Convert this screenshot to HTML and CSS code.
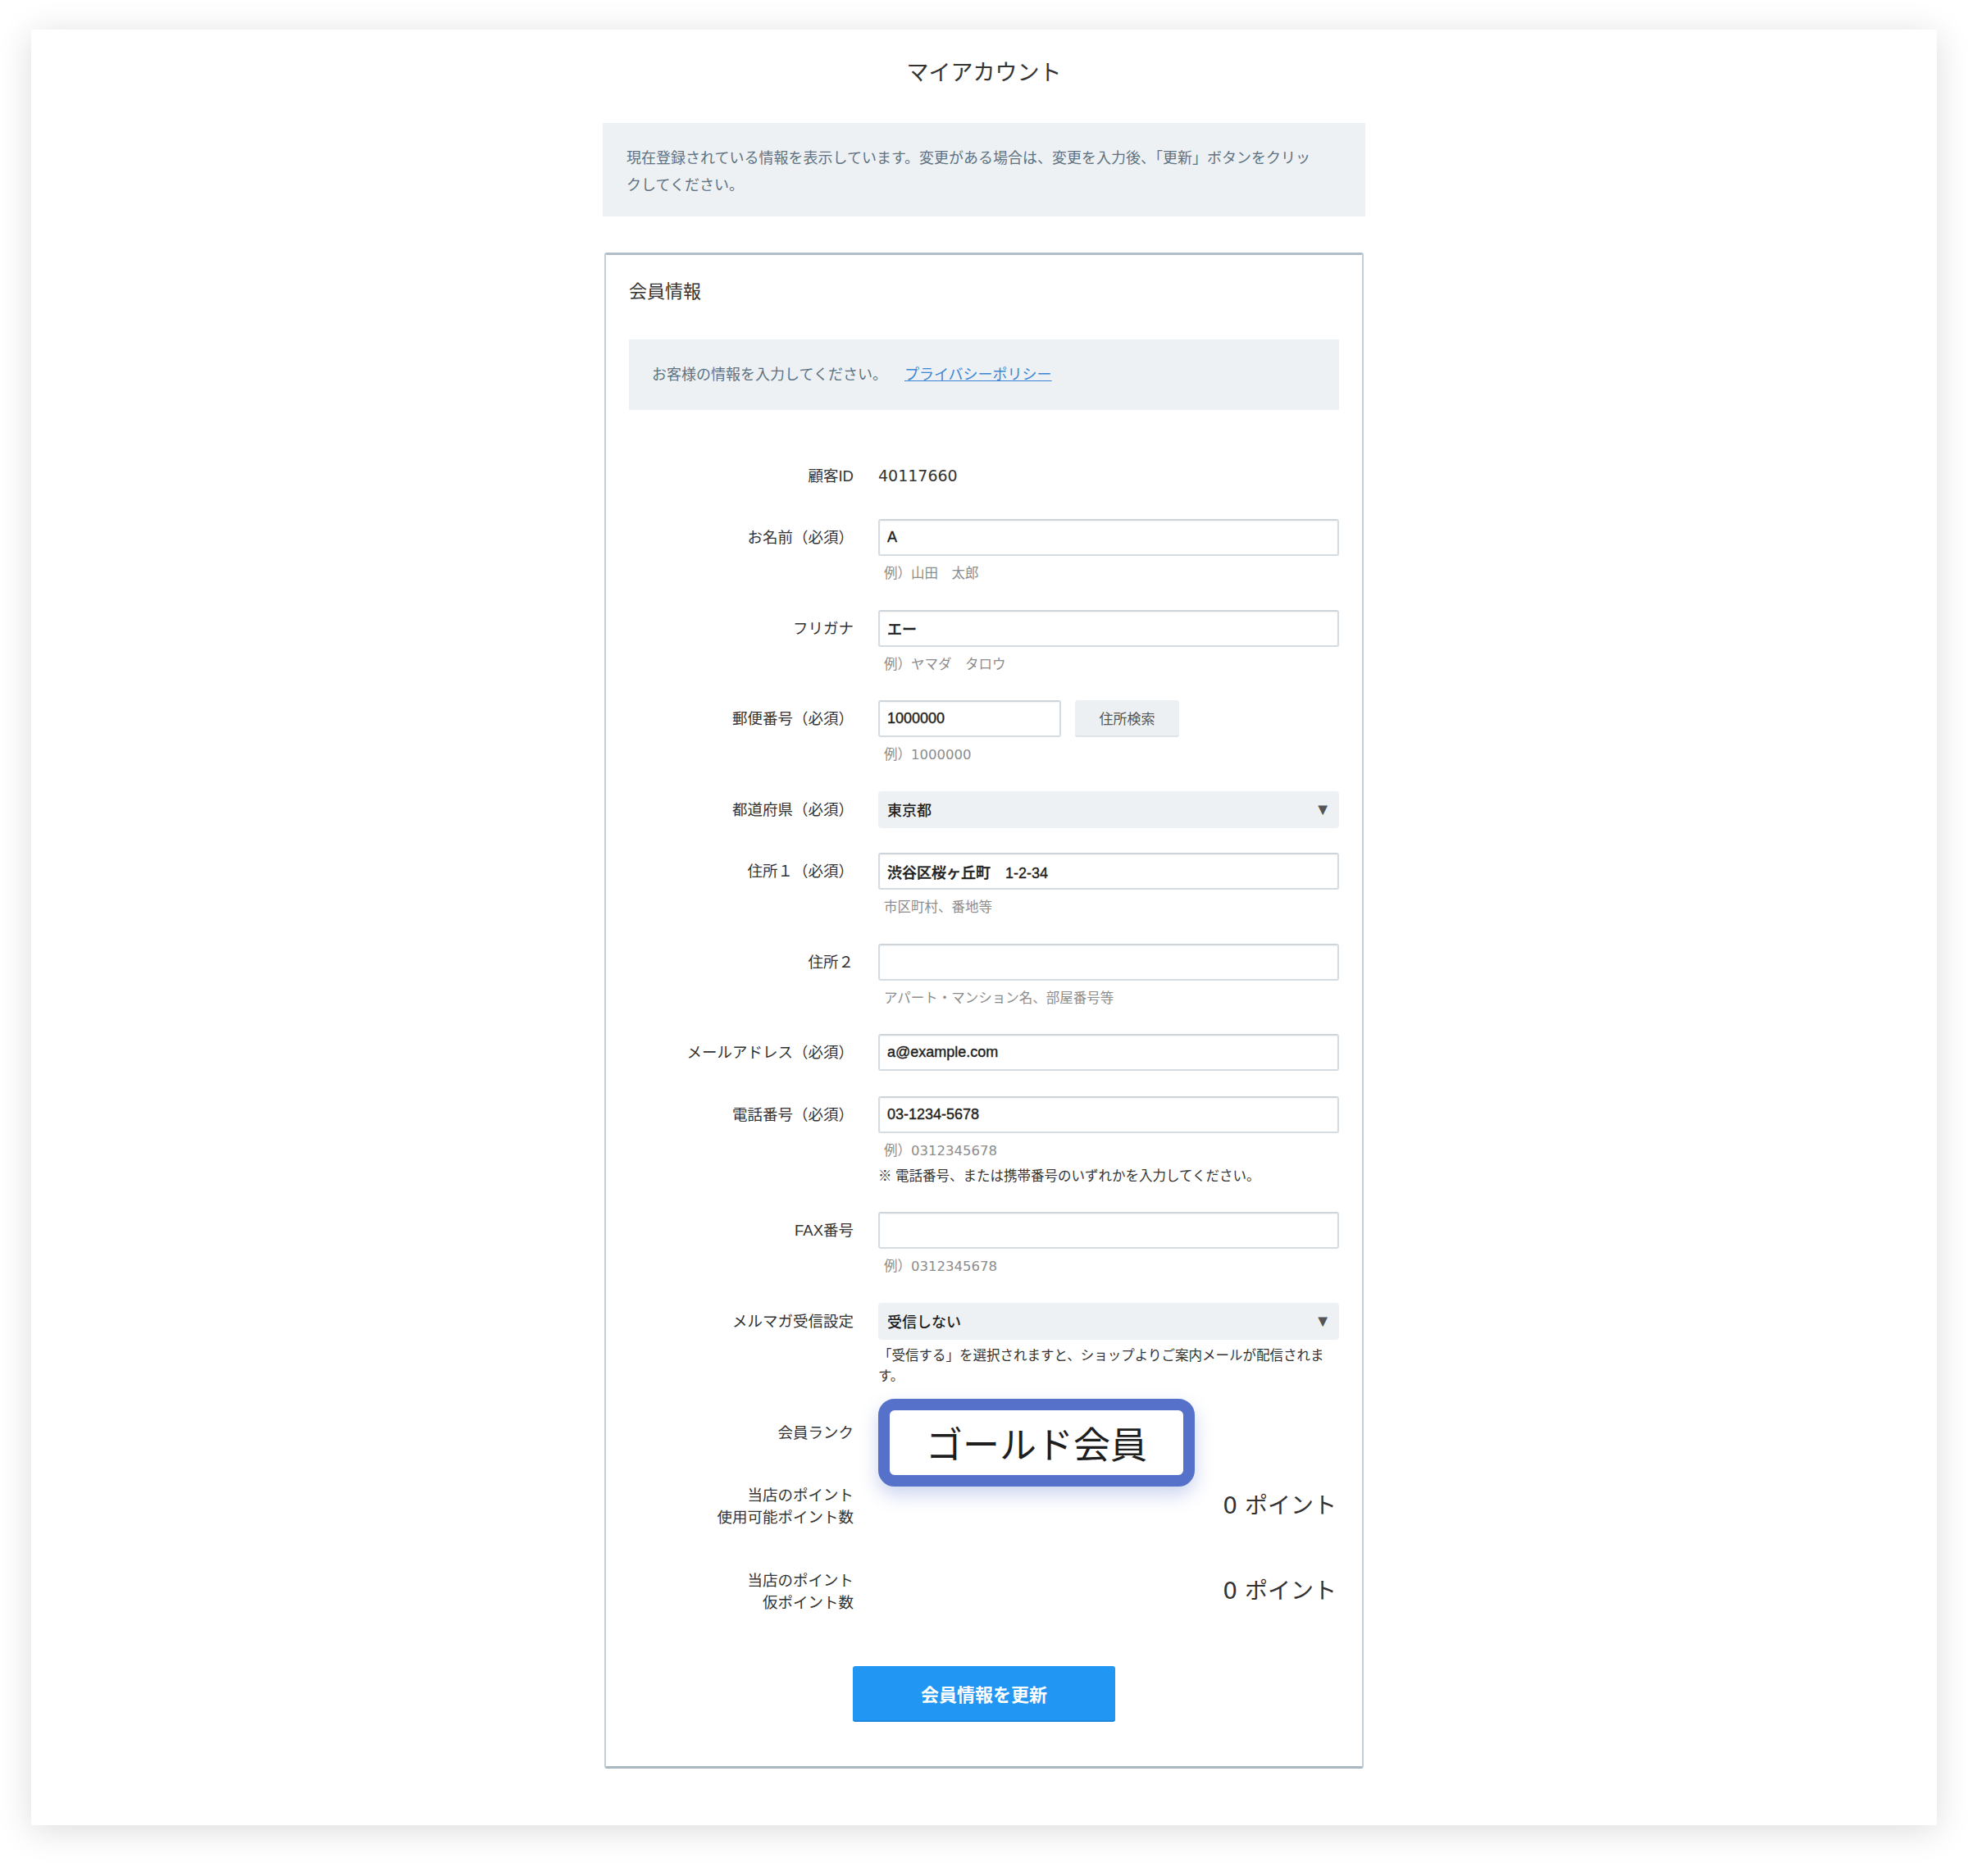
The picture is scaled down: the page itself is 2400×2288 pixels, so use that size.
FILE: index.html
```html
<!DOCTYPE html>
<html lang="ja">
<head>
    <meta charset="UTF-8">
    <title>マイアカウント</title>
    <link rel="stylesheet" href="styles.css">
</head>
<body>
    <div class="sheet">
        <h1 class="page-title">マイアカウント</h1>

        <div class="notice">現在登録されている情報を表示しています。変更がある場合は、変更を入力後、「更新」ボタンをクリックしてください。</div>

        <div class="card">
            <h2>会員情報</h2>
            <div class="card-intro">お客様の情報を入力してください。<a href="#">プライバシーポリシー</a></div>

            <form class="member-form">
                <div class="row">
                    <div class="label">顧客ID</div>
                    <div class="field"><span class="customer-id">40117660</span></div>
                </div>

                <div class="row">
                    <div class="label">お名前（必須）</div>
                    <div class="field">
                        <input class="text" type="text" value="A">
                        <p class="hint">例）山田　太郎</p>
                    </div>
                </div>

                <div class="row">
                    <div class="label">フリガナ</div>
                    <div class="field">
                        <input class="text" type="text" value="エー">
                        <p class="hint">例）ヤマダ　タロウ</p>
                    </div>
                </div>

                <div class="row">
                    <div class="label">郵便番号（必須）</div>
                    <div class="field">
                        <div class="zip-line">
                            <input class="text zip" type="text" value="1000000">
                            <button type="button" class="zip-search">住所検索</button>
                        </div>
                        <p class="hint">例）1000000</p>
                    </div>
                </div>

                <div class="row">
                    <div class="label">都道府県（必須）</div>
                    <div class="field">
                        <div class="select"><span>東京都</span><span class="arrow">▼</span></div>
                    </div>
                </div>

                <div class="row">
                    <div class="label">住所１（必須）</div>
                    <div class="field">
                        <input class="text" type="text" value="渋谷区桜ヶ丘町　1-2-34">
                        <p class="hint">市区町村、番地等</p>
                    </div>
                </div>

                <div class="row">
                    <div class="label">住所２</div>
                    <div class="field">
                        <input class="text" type="text" value="">
                        <p class="hint">アパート・マンション名、部屋番号等</p>
                    </div>
                </div>

                <div class="row">
                    <div class="label">メールアドレス（必須）</div>
                    <div class="field">
                        <input class="text" type="text" value="a@example.com">
                    </div>
                </div>

                <div class="row">
                    <div class="label">電話番号（必須）</div>
                    <div class="field">
                        <input class="text" type="text" value="03-1234-5678">
                        <p class="hint">例）0312345678</p>
                        <p class="note">※ 電話番号、または携帯番号のいずれかを入力してください。</p>
                    </div>
                </div>

                <div class="row">
                    <div class="label">FAX番号</div>
                    <div class="field">
                        <input class="text" type="text" value="">
                        <p class="hint">例）0312345678</p>
                    </div>
                </div>

                <div class="row mag">
                    <div class="label">メルマガ受信設定</div>
                    <div class="field">
                        <div class="select"><span>受信しない</span><span class="arrow">▼</span></div>
                        <p class="note mag-note">「受信する」を選択されますと、ショップよりご案内メールが配信されます。</p>
                    </div>
                </div>

                <div class="row rank">
                    <div class="label">会員ランク</div>
                    <div class="field">
                        <div class="rank-badge">ゴールド会員</div>
                    </div>
                </div>

                <div class="row points">
                    <div class="label">当店のポイント<br>使用可能ポイント数</div>
                    <div class="field point-value">0 ポイント</div>
                </div>

                <div class="row points">
                    <div class="label">当店のポイント<br>仮ポイント数</div>
                    <div class="field point-value">0 ポイント</div>
                </div>

                <div class="submit-wrap">
                    <button type="button" class="submit">会員情報を更新</button>
                </div>
            </form>
        </div>
    </div>
</body>
</html>
```

FILE: styles.css
```css
body {
    margin: 0;
    background-color: #fff;
    font-family: "Liberation Sans", "Noto Sans CJK JP", sans-serif;
    color: #333;
}
.sheet {
    margin: 36px 38px 60px;
    padding: 33px 0 69px;
    background-color: #fff;
    box-shadow: 0 6px 40px rgba(0, 0, 0, 0.14);
}
.page-title {
    margin: 0 0 41px;
    text-align: center;
    font-size: 27px;
    font-weight: normal;
    line-height: 40px;
}
.notice {
    width: 930px;
    box-sizing: border-box;
    margin: 0 auto 44px;
    padding: 27px 52px 21px 29px;
    background-color: #edf1f4;
    color: #5e7282;
    font-size: 18px;
    line-height: 33px;
}
.card {
    width: 926px;
    box-sizing: border-box;
    margin: 0 auto;
    padding: 29px 28px 54px;
    border: 2px solid #c3cdd4;
    border-top: 3px solid #b1bec7;
    border-bottom: 3px solid #aab8c1;
    border-radius: 3px;
}
.card h2 {
    margin: 0 0 42px;
    font-size: 22px;
    font-weight: normal;
    line-height: 32px;
}
.card-intro {
    padding: 30px 28px;
    background-color: #edf1f4;
    color: #5e7282;
    font-size: 18px;
    line-height: 26px;
}
.card-intro a {
    margin-left: 21px;
    color: #3b86d4;
}
.member-form {
    margin-top: 57.5px;
}
.row {
    display: grid;
    grid-template-columns: 274px 1fr;
    column-gap: 30px;
    margin-bottom: 30.5px;
}
.label {
    text-align: right;
    font-size: 18.5px;
    line-height: 45px;
    color: #333;
}
.customer-id {
    font-family: "DejaVu Sans", "Noto Sans CJK JP", sans-serif;
    font-size: 19px;
    line-height: 45px;
}
.text {
    display: block;
    width: 100%;
    height: 45px;
    box-sizing: border-box;
    margin: 0;
    padding: 0 9px;
    border: 2px solid #d5dce1;
    border-top-color: #cdd5db;
    border-radius: 3px;
    box-shadow: inset 0 1px 2px rgba(0, 0, 0, 0.05);
    font: 500 18px "Liberation Sans", "Noto Sans CJK JP", sans-serif;
    -webkit-text-stroke: 0.4px #1e1e1e;
    color: #1e1e1e;
}
.hint {
    margin: 8px 0 0 7px;
    font-family: "DejaVu Sans", "Noto Sans CJK JP", sans-serif;
    font-size: 16.5px;
    line-height: 27px;
    color: #8c8c8c;
}
.note {
    margin: 4px 0 0;
    font-size: 16.5px;
    line-height: 27px;
    color: #333;
}
.zip-line {
    display: flex;
    gap: 17px;
}
.text.zip {
    width: 223px;
}
.zip-search {
    width: 127px;
    height: 45px;
    border: none;
    border-bottom: 2px solid #dfe4e8;
    border-radius: 3px;
    background-color: #edf0f3;
    color: #555;
    font: 17px "Liberation Sans", "Noto Sans CJK JP", sans-serif;
}
.select {
    display: flex;
    justify-content: space-between;
    align-items: center;
    height: 45px;
    padding: 0 10px 0 11px;
    border-radius: 4px;
    background-color: #eef1f4;
    font-size: 18px;
    font-weight: 500;
    color: #1e1e1e;
}
.select .arrow {
    font-size: 20px;
    color: #555;
}
.row.mag {
    margin-bottom: 15.5px;
}
.mag-note {
    margin-top: 7px;
    line-height: 25px;
}
.row.rank {
    margin-bottom: 0;
}
.row.rank .label {
    padding-top: 27.5px;
    line-height: 27px;
}
.rank-badge {
    display: flex;
    align-items: center;
    justify-content: center;
    width: 386px;
    height: 107px;
    box-sizing: border-box;
    margin-bottom: -3px;
    border: 14px solid #5571c9;
    border-radius: 20px;
    background-color: #fff;
    box-shadow: 0 10px 22px rgba(85, 113, 201, 0.3);
    font-family: "Noto Sans CJK JP", sans-serif;
    font-size: 45px;
    color: #1e1e1e;
}
.row.points {
    align-items: center;
    margin-bottom: 50px;
}
.row.points .label {
    line-height: 27px;
}
.point-value {
    text-align: right;
    padding-right: 3px;
    font-family: "DejaVu Sans", "Noto Sans CJK JP", sans-serif;
    font-size: 28px;
    line-height: 40px;
    margin-top: -1px;
    color: #333;
}
.row.points:last-of-type {
    margin-bottom: 0;
}
.submit-wrap {
    margin-top: 64px;
    text-align: center;
}
.submit {
    width: 320px;
    height: 68px;
    border: none;
    border-bottom: 2px solid #1d87de;
    border-radius: 3px;
    background-color: #2196f3;
    color: #fff;
    font: 700 22px "Noto Sans CJK JP", sans-serif;
}
```
